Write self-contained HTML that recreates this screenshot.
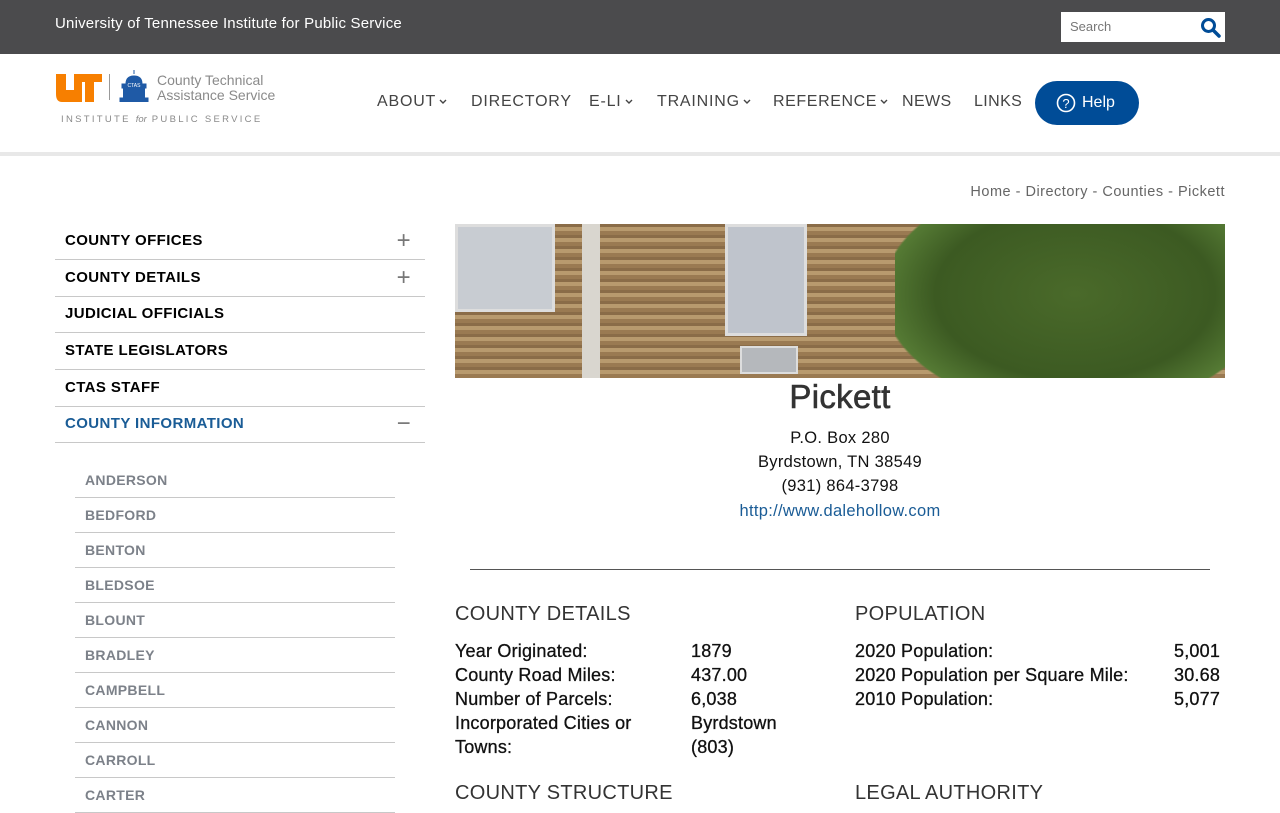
<!DOCTYPE html>
<html><head><meta charset="utf-8">
<style>
*{margin:0;padding:0;box-sizing:border-box}
body{width:1280px;height:800px;overflow:hidden;background:#fff;font-family:"Liberation Sans",Arial,sans-serif;position:relative;color:#000}
.a{position:absolute}
.top{left:0;top:0;width:1280px;height:54px;background:#4b4b4d}
.top .t{left:55px;top:15px;color:#fff;font-size:15px;letter-spacing:.2px}
.search{left:1061px;top:12px;width:164px;height:30px;background:#fff}
.search span{position:absolute;left:9px;top:7px;font-size:13px;color:#777}
.hdr{left:0;top:54px;width:1280px;height:98px;background:#fff;border-bottom:4px solid #e8e8e8;box-sizing:content-box}
.nav{top:93px;font-size:16px;color:#444;letter-spacing:.8px}
.chev{display:inline-block;margin-left:3px;vertical-align:middle}
.help{left:1035px;top:81px;width:104px;height:44px;border-radius:22px;background:#004c97;color:#fff;font-size:16px}
.side div{position:absolute;left:55px;width:370px;border-bottom:1px solid #c8c8c8;font-weight:bold;font-size:15px;letter-spacing:.4px;padding-left:10px;height:37px;line-height:36px}
.pm{position:absolute;right:14px;top:0;color:#777;font-weight:normal;font-size:24px}
.cty div{position:absolute;left:75px;width:320px;border-bottom:1px solid #c8c8c8;font-weight:bold;font-size:14px;letter-spacing:.3px;color:#7c8189;padding-left:10px;height:35px;line-height:34px}
.ctr{left:455px;width:770px;text-align:center;font-size:16.5px;color:#111;letter-spacing:.3px}
h3{position:absolute;font-weight:normal;font-size:20px;color:#333;letter-spacing:.3px}
.r{position:absolute;font-size:18px;color:#111;letter-spacing:.2px;-webkit-text-stroke:.3px #111}
</style></head><body>
<div class="a top"><div class="a t">University of Tennessee Institute for Public Service</div>
<div class="a search"><span>Search</span>
<svg class="a" style="left:139px;top:5px" width="21" height="21" viewBox="0 0 21 21"><circle cx="8.5" cy="8.5" r="6" fill="none" stroke="#004c97" stroke-width="3"/><path d="M13 13l6 6" stroke="#004c97" stroke-width="3.5" stroke-linecap="round"/></svg></div></div>
<div class="a hdr"></div>
<svg class="a" style="left:56px;top:74px" width="46" height="28" viewBox="0 0 46 28"><path d="M0 0h10v16h8V0h8v28H6Q0 28 0 20z" fill="#f77f00"/><path d="M22 0h24v8h-8v20h-9V8h-7z" fill="#f77f00"/></svg>
<div class="a" style="left:109px;top:74px;width:1px;height:26px;background:#999"></div>
<svg class="a" style="left:119px;top:70px" width="30" height="32" viewBox="0 0 30 32"><path d="M15 0v4M7 14q0-8 8-8t8 8zM3 14h24v4H3zM1 28h28v4H1z" fill="#1f5aa6" stroke="#1f5aa6"/><rect x="4" y="18" width="22" height="10" fill="#1f5aa6"/><text x="15" y="17" font-size="5" fill="#fff" text-anchor="middle" font-family="Liberation Sans">CTAS</text></svg>
<div class="a" style="left:157px;top:73px;color:#8a8a8a;font-size:14px;line-height:15px">County Technical<br>Assistance Service</div>
<div class="a" style="left:61px;top:114px;color:#8a8a8a;font-size:9.5px;letter-spacing:2.3px">INSTITUTE <i style="letter-spacing:0">for</i> PUBLIC SERVICE</div>
<div class="a nav" style="left:377px">ABOUT<svg class="chev" width="8" height="6" viewBox="0 0 8 6"><path d="M1 1l3 3 3-3" fill="none" stroke="#444" stroke-width="1.4"/></svg></div>
<div class="a nav" style="left:471px">DIRECTORY</div>
<div class="a nav" style="left:589px">E-LI<svg class="chev" width="8" height="6" viewBox="0 0 8 6"><path d="M1 1l3 3 3-3" fill="none" stroke="#444" stroke-width="1.4"/></svg></div>
<div class="a nav" style="left:657px">TRAINING<svg class="chev" width="8" height="6" viewBox="0 0 8 6"><path d="M1 1l3 3 3-3" fill="none" stroke="#444" stroke-width="1.4"/></svg></div>
<div class="a nav" style="left:773px;letter-spacing:.6px">REFERENCE<svg class="chev" width="8" height="6" viewBox="0 0 8 6"><path d="M1 1l3 3 3-3" fill="none" stroke="#444" stroke-width="1.4"/></svg></div>
<div class="a nav" style="left:902px;letter-spacing:.4px">NEWS</div>
<div class="a nav" style="left:974px;letter-spacing:.4px">LINKS</div>
<div class="a help"><svg class="a" style="left:21px;top:12px" width="20" height="20" viewBox="0 0 20 20"><circle cx="10" cy="10" r="8.5" fill="none" stroke="#fff" stroke-width="1.6"/><text x="10" y="15" font-size="13" fill="#fff" text-anchor="middle" font-family="Liberation Sans">?</text></svg><span class="a" style="left:47px;top:13px">Help</span></div>
<div class="a" style="right:55px;top:184px;font-size:14.5px;color:#666;letter-spacing:.5px">Home - Directory - Counties - Pickett</div>
<div class="side">
<div style="top:223px">COUNTY OFFICES<span class="pm">+</span></div>
<div style="top:260px">COUNTY DETAILS<span class="pm">+</span></div>
<div style="top:296px">JUDICIAL OFFICIALS</div>
<div style="top:333px">STATE LEGISLATORS</div>
<div style="top:370px">CTAS STAFF</div>
<div style="top:406px;color:#1a5c96">COUNTY INFORMATION<span class="pm">−</span></div>
</div>
<div class="cty">
<div style="top:463px">ANDERSON</div><div style="top:498px">BEDFORD</div><div style="top:533px">BENTON</div><div style="top:568px">BLEDSOE</div><div style="top:603px">BLOUNT</div><div style="top:638px">BRADLEY</div><div style="top:673px">CAMPBELL</div><div style="top:708px">CANNON</div><div style="top:743px">CARROLL</div><div style="top:778px">CARTER</div>
</div>
<div class="a" style="left:455px;top:224px;width:770px;height:154px;background:repeating-linear-gradient(0deg,#9a7a52 0 4px,#b89a6e 4px 8px,#8a6c48 8px 11px);overflow:hidden">
<div class="a" style="left:0;top:0;width:100px;height:88px;background:#c8ccd2;border:3px solid #ddd"></div>
<div class="a" style="left:127px;top:0;width:18px;height:154px;background:#d9d6cf"></div>
<div class="a" style="left:270px;top:0;width:82px;height:112px;background:#bfc4cc;border:3px solid #ddd"></div>
<div class="a" style="left:285px;top:122px;width:58px;height:28px;background:#b5b8bc;border:2px solid #ddd"></div>
<div class="a" style="left:480px;top:0;width:30px;height:104px;background:#c8ccd2"></div>
<div class="a" style="left:440px;top:-20px;width:360px;height:200px;background:radial-gradient(ellipse at 50% 45%,#4a6a2a 0,#3c5a22 55%,#557a34 75%,transparent 76%)"></div>
</div>
<div class="a ctr" style="top:378px;font-size:33px;color:#333;-webkit-text-stroke:.6px #333">Pickett</div>
<div class="a ctr" style="top:429px">P.O. Box 280</div>
<div class="a ctr" style="top:453px">Byrdstown, TN 38549</div>
<div class="a ctr" style="top:477px">(931) 864-3798</div>
<div class="a ctr" style="top:502px;color:#1a5c96">http://www.dalehollow.com</div>
<div class="a" style="left:470px;top:569px;width:740px;height:1px;background:#555"></div>
<h3 style="left:455px;top:603px">COUNTY DETAILS</h3>
<h3 style="left:855px;top:603px">POPULATION</h3>
<div class="r" style="left:455px;top:639px;line-height:24px">Year Originated:<br>County Road Miles:<br>Number of Parcels:<br>Incorporated Cities or<br>Towns:</div>
<div class="r" style="left:691px;top:639px;line-height:24px">1879<br>437.00<br>6,038<br>Byrdstown<br>(803)</div>
<div class="r" style="left:855px;top:639px;line-height:24px">2020 Population:<br>2020 Population per Square Mile:<br>2010 Population:</div>
<div class="r" style="left:1174px;top:639px;line-height:24px">5,001<br>30.68<br>5,077</div>
<h3 style="left:455px;top:782px">COUNTY STRUCTURE</h3>
<h3 style="left:855px;top:782px">LEGAL AUTHORITY</h3>
</body></html>
